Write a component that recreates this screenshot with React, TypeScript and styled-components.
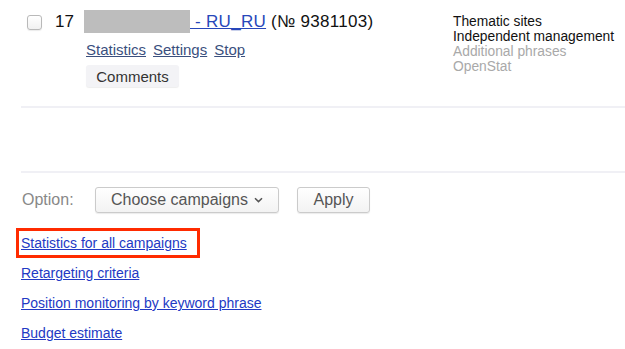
import styled, {createGlobalStyle} from "styled-components";

const GlobalStyle = createGlobalStyle`
    body {
        margin: 0;
        background: #fff;
        font-family: "Liberation Sans", Arial, sans-serif;
    }
`
const Page = styled.div`
    width: 625px;
    height: 349px;
    overflow: hidden;
`
const CampaignRow = styled.div`
    display: flex;
    align-items: flex-start;
    height: 106px;
    padding: 9px 0 0 27px;
    box-sizing: border-box;
`
const Checkbox = styled.span`
    width: 15px;
    height: 15px;
    margin-top: 6px;
    box-sizing: border-box;
    border: 1px solid #b9b9b9;
    border-radius: 3px;
    background: linear-gradient(#fff, #f1f1f1);
    box-shadow: 0 1px 1px rgba(0, 0, 0, 0.08);
    flex-shrink: 0;
`
const Number = styled.span`
    margin-left: 13px;
    width: 29px;
    font-size: 17px;
    line-height: 25px;
    color: #111;
`
const Main = styled.div`
    width: 369px;
`
const Title = styled.div`
    display: flex;
    align-items: center;
    height: 25px;
    font-size: 17px;
    letter-spacing: 0.3px;
    color: #111;
    white-space: pre;
`
const Masked = styled.span`
    width: 106px;
    height: 23px;
    background: #bdbdbd;
`
const TitleLink = styled.a`
    color: #2747ba;
    text-decoration: underline;
    margin-right: 5px;
`
const Actions = styled.div`
    display: flex;
    column-gap: 7px;
    margin: 7px 0 0 2px;
    font-size: 15px;
    line-height: 18px;
`
const ActionLink = styled.a`
    color: #3a4f7e;
    text-decoration: underline;
`
const CommentsButton = styled.button`
    margin: 6px 0 0 2px;
    height: 22px;
    width: 93px;
    padding: 0;
    border: none;
    border-radius: 3px;
    background: #f3f3f6;
    box-shadow: 0 1px 1px rgba(0, 0, 0, 0.07);
    font-family: inherit;
    font-size: 15px;
    color: #333;
`
const Features = styled.div`
    margin-top: 5px;
    font-size: 13.8px;
    line-height: 15px;
`
const Feature = styled.div<{ $muted?: boolean }>`
    color: ${props => props.$muted ? "#a9a9a9" : "#111"};
`
const Divider = styled.div`
    margin-left: 21px;
    height: 2px;
    background: #f0f0f5;
`
const Spacer = styled.div`
    height: 63px;
`
const OptionRow = styled.div`
    display: flex;
    align-items: center;
    padding: 14px 0 0 22px;
    height: 26px;
`
const OptionLabel = styled.span`
    width: 73px;
    font-size: 16px;
    color: #888;
`
const Button = styled.button`
    display: flex;
    align-items: center;
    column-gap: 6px;
    height: 26px;
    padding: 0 15px;
    border: 1px solid #cbcbcb;
    border-radius: 3px;
    background: linear-gradient(#fff, #f3f3f3);
    box-shadow: 0 1px 1px rgba(0, 0, 0, 0.08);
    font-family: inherit;
    font-size: 16px;
    color: #555;
`
const ChooseButton = styled(Button)`
    width: 184px;
    margin-right: 18px;
`
const ApplyButton = styled(Button)`
    width: 73px;
    justify-content: center;
`
const LinkList = styled.div`
    display: flex;
    flex-direction: column;
    align-items: flex-start;
    margin: 15px 0 0 16px;
`
const LinkItem = styled.div<{ $highlight?: boolean }>`
    height: 30px;
    box-sizing: border-box;
    display: flex;
    align-items: center;
    padding: ${props => props.$highlight ? "0 10px 0 2px" : "0 0 0 5px"};
    border: ${props => props.$highlight ? "3px solid #ff2b00" : "none"};
    font-size: 14px;
`
const BlueLink = styled.a`
    color: #2239c4;
    text-decoration: underline;
`

const Chevron = () => (
	<svg width="9" height="6" viewBox="0 0 9 6">
		<path d="M1 1.2 4.5 4.6 8 1.2" fill="none" stroke="#555" strokeWidth="1.5"/>
	</svg>
)

export default function App() {
	return (
		<Page>
			<GlobalStyle/>
			<CampaignRow>
				<Checkbox/>
				<Number>17</Number>
				<Main>
					<Title>
						<Masked/>
						<TitleLink href="#"> - RU_RU</TitleLink>
						(№ 9381103)
					</Title>
					<Actions>
						<ActionLink href="#">Statistics</ActionLink>
						<ActionLink href="#">Settings</ActionLink>
						<ActionLink href="#">Stop</ActionLink>
					</Actions>
					<CommentsButton>Comments</CommentsButton>
				</Main>
				<Features>
					<Feature>Thematic sites</Feature>
					<Feature>Independent management</Feature>
					<Feature $muted>Additional phrases</Feature>
					<Feature $muted>OpenStat</Feature>
				</Features>
			</CampaignRow>
			<Divider/>
			<Spacer/>
			<Divider/>
			<OptionRow>
				<OptionLabel>Option:</OptionLabel>
				<ChooseButton>Choose campaigns <Chevron/></ChooseButton>
				<ApplyButton>Apply</ApplyButton>
			</OptionRow>
			<LinkList>
				<LinkItem $highlight><BlueLink href="#">Statistics for all campaigns</BlueLink></LinkItem>
				<LinkItem><BlueLink href="#">Retargeting criteria</BlueLink></LinkItem>
				<LinkItem><BlueLink href="#">Position monitoring by keyword phrase</BlueLink></LinkItem>
				<LinkItem><BlueLink href="#">Budget estimate</BlueLink></LinkItem>
			</LinkList>
		</Page>
	)
}
